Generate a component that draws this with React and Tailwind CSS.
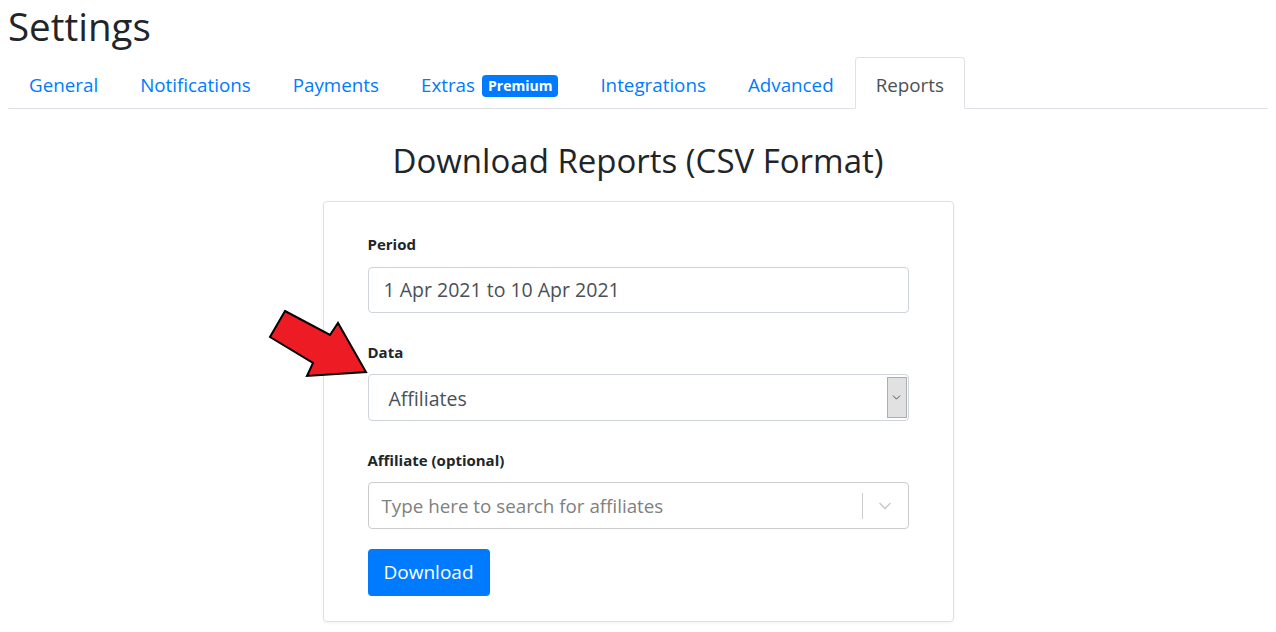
import { ChevronDown } from 'lucide-react'

const tabs = ['General', 'Notifications', 'Payments', 'Extras', 'Integrations', 'Advanced', 'Reports']

function Arrow() {
  // red pointer arrow drawn over the form
  return (
    <svg className="absolute left-[262px] top-[304px]" width="112" height="80" viewBox="262 304 112 80">
      <polygon
        points="285,311 330,335 338,323 366,372 307,376 313,363 270,337"
        fill="#ed1c24"
        stroke="#000"
        strokeWidth="2"
        strokeLinejoin="miter"
      />
    </svg>
  )
}

export default function App() {
  return (
    <div className="relative min-h-screen bg-white px-2 font-['Segoe_UI','Open_Sans',sans-serif] text-[#212529]">
      <h1 className="pt-[3px] text-[38.5px] leading-[46px] font-normal">Settings</h1>

      {/* Tabs */}
      <ul className="mt-[8px] flex border-b border-[#dee2e6]">
        {tabs.map((t) => {
          const active = t === 'Reports'
          return (
            <li key={t} className="-mb-px">
              <a
                className={
                  active
                    ? 'flex items-center rounded-t border border-[#dee2e6] border-b-white bg-white px-[20px] pt-[12px] pb-[8px] text-[18.8px] leading-[30px] text-[#495057]'
                    : 'flex items-center rounded-t border border-transparent px-[20px] pt-[12px] pb-[8px] text-[18.8px] leading-[30px] text-[#007bff]'
                }
              >
                {t}
                {t === 'Extras' && (
                  <span className="ml-[7px] mt-[1px] rounded-[4px] bg-[#007bff] px-[6px] text-[14px] leading-[22px] font-bold text-white">
                    Premium
                  </span>
                )}
              </a>
            </li>
          )
        })}
      </ul>

      <h2 className="mt-[32px] text-center text-[33px] leading-[40px] font-normal">Download Reports (CSV Format)</h2>

      {/* Form card */}
      <div className="mx-auto mt-[20px] w-[631px] rounded-[4px] border border-[#dee2e6] bg-white px-[44px] pt-[31px] pb-[25px] shadow-[0_1px_3px_rgba(0,0,0,0.06)]">
        <label className="block text-[15px] leading-[22px] font-bold">Period</label>
        <div className="mt-[12px] h-[46px] rounded-[4px] border border-[#ced4da] px-[15px] text-[19.5px] leading-[44px] text-[#495057]">
          1 Apr 2021 to 10 Apr 2021
        </div>

        <label className="mt-[28px] block text-[15px] leading-[22px] font-bold">Data</label>
        <div className="mt-[11px] flex h-[47px] items-stretch rounded-[4px] border border-[#ced4da] text-[19.5px] text-[#495057]">
          <span className="flex-1 pl-[20px] leading-[47px]">Affiliates</span>
          <span className="my-[2px] mr-[1px] flex w-[20px] items-center justify-center border border-[#adadad] bg-[#e1e1e1]">
            <ChevronDown size={13} strokeWidth={1.5} className="text-[#333]" />
          </span>
        </div>

        <label className="mt-[28px] block text-[15px] leading-[22px] font-bold">Affiliate (optional)</label>
        <div className="mt-[11px] flex h-[47px] items-center rounded-[4px] border border-[#cccccc] text-[18.8px]">
          <span className="flex-1 pl-[13px] pt-[2px] text-[#808080]">Type here to search for affiliates</span>
          <span className="h-[26px] w-px bg-[#cccccc]" />
          <span className="flex w-[45px] items-center justify-center">
            <ChevronDown size={20} strokeWidth={2} className="text-[#cccccc]" />
          </span>
        </div>

        <button className="mt-[20px] h-[47px] rounded-[4px] bg-[#007bff] px-[16px] text-[19px] text-white">Download</button>
      </div>

      <Arrow />
    </div>
  )
}
